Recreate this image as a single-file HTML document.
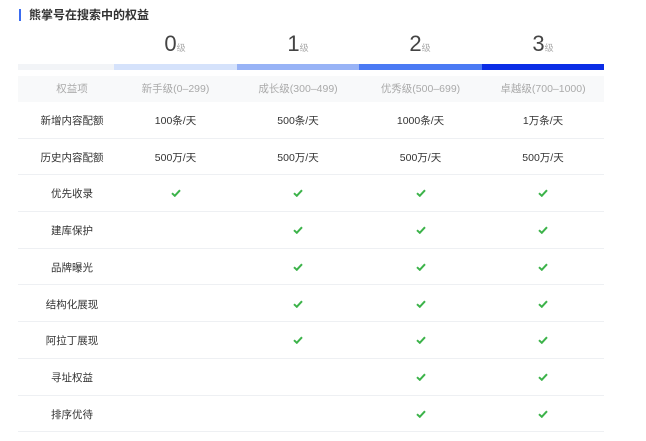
<!DOCTYPE html>
<html><head><meta charset="utf-8"><style>
body{margin:0;background:#fff;width:646px;height:441px;overflow:hidden;font-family:"Liberation Sans","Noto Sans CJK SC",sans-serif;}
.t{position:absolute;left:19px;top:9px;height:12px;border-left:2px solid #3b6cf0;padding-left:8px;font-size:12px;line-height:12px;font-weight:bold;color:#333;}
.lv{position:absolute;top:31px;width:122px;text-align:center;font-size:22px;color:#444;line-height:26px;font-family:"Liberation Sans","Noto Sans CJK SC",sans-serif;font-weight:normal}
.lv span{font-size:9px;color:#aaa;font-family:"Noto Sans CJK SC",sans-serif}
.bar{position:absolute;top:64px;height:6px}
.r{position:absolute;left:18px;width:586px;height:36.7px;border-bottom:1px solid #eef0f3;box-sizing:border-box;font-size:10.5px;color:#333}
.r div{position:absolute;top:1px;line-height:36px;text-align:center}
.c0{left:6px;width:96px}.c1{left:96px;width:123px}.c2{left:219px;width:122px}.c3{left:341px;width:123px}.c4{left:464px;width:122px}
.h{background:#f8f9fa;color:#aaa;border:none}
.ck svg{display:block;margin:13px auto 0}
</style></head><body>
<div class="t">熊掌号在搜索中的权益</div>
<div class="lv" style="left:114px">0<span>级</span></div>
<div class="lv" style="left:237px">1<span>级</span></div>
<div class="lv" style="left:359px">2<span>级</span></div>
<div class="lv" style="left:482px">3<span>级</span></div>
<div class="bar" style="left:18px;width:96px;background:#f2f4f7"></div>
<div class="bar" style="left:114px;width:123px;background:#d5e2fb"></div>
<div class="bar" style="left:237px;width:122px;background:#98b3f6"></div>
<div class="bar" style="left:359px;width:123px;background:#4b7af4"></div>
<div class="bar" style="left:482px;width:122px;background:#0b2de6"></div>
<div class="r h" style="top:76px;height:26px"><div class="c0" style="line-height:26px;top:0">权益项</div><div class="c1" style="line-height:26px;top:0">新手级(0–299)</div><div class="c2" style="line-height:26px;top:0">成长级(300–499)</div><div class="c3" style="line-height:26px;top:0">优秀级(500–699)</div><div class="c4" style="line-height:26px;top:0">卓越级(700–1000)</div></div>
<div class="r" style="top:102px"><div class="c0">新增内容配额</div><div class="c1">100条/天</div><div class="c2">500条/天</div><div class="c3">1000条/天</div><div class="c4">1万条/天</div></div>
<div class="r" style="top:138.7px"><div class="c0">历史内容配额</div><div class="c1">500万/天</div><div class="c2">500万/天</div><div class="c3">500万/天</div><div class="c4">500万/天</div></div>
<svg width="0" height="0" style="position:absolute"><symbol id="k" viewBox="0 0 10 8"><path d="M1 4.2 L3.8 6.8 L9 1.2" fill="none" stroke="#3cb34a" stroke-width="2"/></symbol></svg>
<div class="r" style="top:175.4px"><div class="c0">优先收录</div><div class="c1 ck"><svg width="10" height="8"><use href="#k"/></svg></div><div class="c2 ck"><svg width="10" height="8"><use href="#k"/></svg></div><div class="c3 ck"><svg width="10" height="8"><use href="#k"/></svg></div><div class="c4 ck"><svg width="10" height="8"><use href="#k"/></svg></div></div>
<div class="r" style="top:212.1px"><div class="c0">建库保护</div><div class="c2 ck"><svg width="10" height="8"><use href="#k"/></svg></div><div class="c3 ck"><svg width="10" height="8"><use href="#k"/></svg></div><div class="c4 ck"><svg width="10" height="8"><use href="#k"/></svg></div></div>
<div class="r" style="top:248.8px"><div class="c0">品牌曝光</div><div class="c2 ck"><svg width="10" height="8"><use href="#k"/></svg></div><div class="c3 ck"><svg width="10" height="8"><use href="#k"/></svg></div><div class="c4 ck"><svg width="10" height="8"><use href="#k"/></svg></div></div>
<div class="r" style="top:285.5px"><div class="c0">结构化展现</div><div class="c2 ck"><svg width="10" height="8"><use href="#k"/></svg></div><div class="c3 ck"><svg width="10" height="8"><use href="#k"/></svg></div><div class="c4 ck"><svg width="10" height="8"><use href="#k"/></svg></div></div>
<div class="r" style="top:322.2px"><div class="c0">阿拉丁展现</div><div class="c2 ck"><svg width="10" height="8"><use href="#k"/></svg></div><div class="c3 ck"><svg width="10" height="8"><use href="#k"/></svg></div><div class="c4 ck"><svg width="10" height="8"><use href="#k"/></svg></div></div>
<div class="r" style="top:358.9px"><div class="c0">寻址权益</div><div class="c3 ck"><svg width="10" height="8"><use href="#k"/></svg></div><div class="c4 ck"><svg width="10" height="8"><use href="#k"/></svg></div></div>
<div class="r" style="top:395.6px"><div class="c0">排序优待</div><div class="c3 ck"><svg width="10" height="8"><use href="#k"/></svg></div><div class="c4 ck"><svg width="10" height="8"><use href="#k"/></svg></div></div>
</body></html>
